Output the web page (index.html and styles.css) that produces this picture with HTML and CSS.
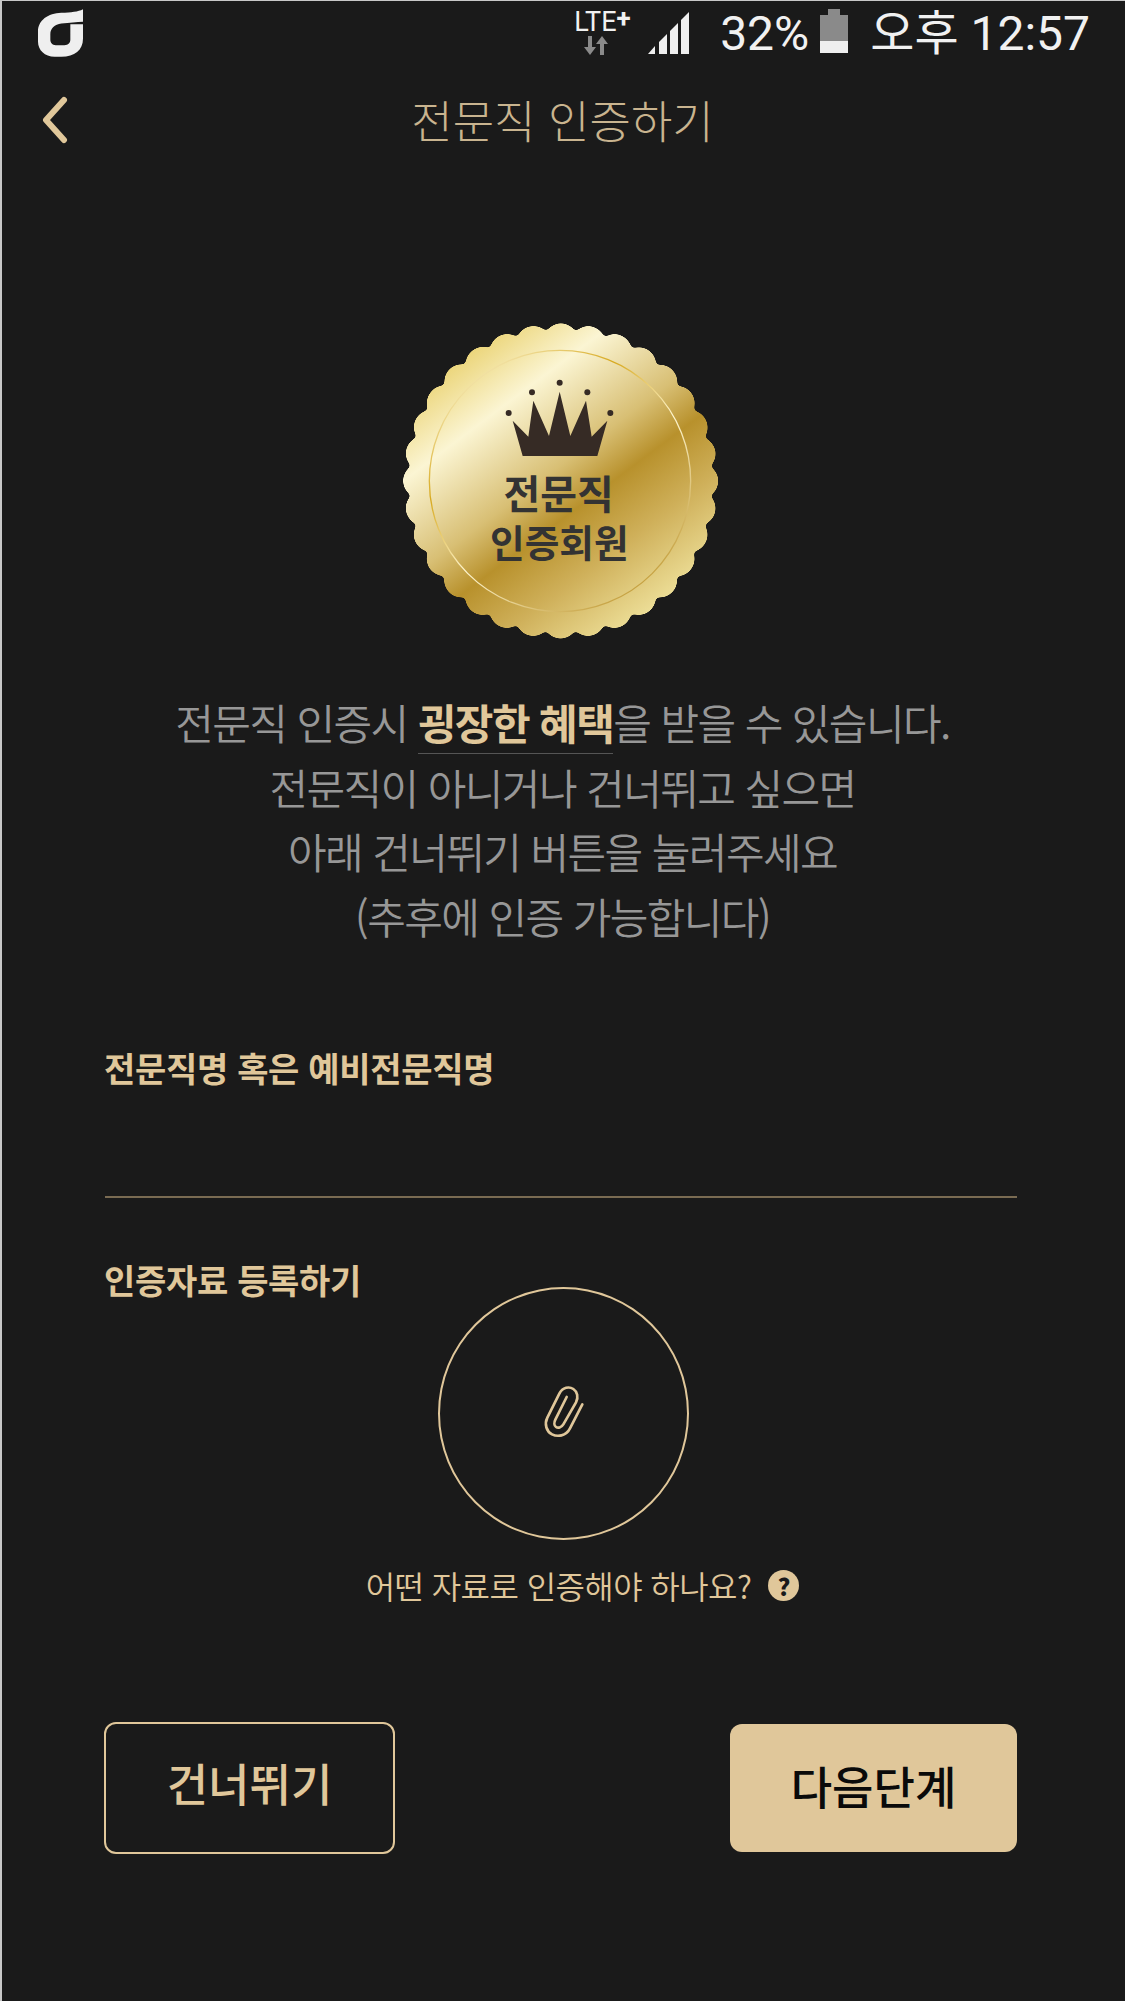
FILE: index.html
```html
<!DOCTYPE html>
<html lang="ko">
<head>
    <meta charset="UTF-8">
    <meta name="viewport" content="width=device-width, initial-scale=1.0">
    <title>전문직 인증하기</title>
    <link rel="stylesheet" href="styles.css">
</head>
<body>
    <div class="screen">
        <div class="status-bar">
            <svg class="app-logo" viewBox="55 27 135 143" width="45" height="48">
                <path fill="#efefef" d="M190 27V65C170 66 150 68 125 70C105 72 92 85 92 102V118C92 128 98 135 108 135H134C146 135 152 128 152 118V72H190V115C190 150 165 170 125 170H105C75 170 55 150 55 125V95C55 60 85 40 125 38C155 36 175 35 190 27Z"/>
            </svg>
            <div class="status-right">
                <div class="lte">
                    <span class="lte-text">LTE<span class="lte-plus">+</span></span>
                    <svg class="lte-arrows" viewBox="0 0 24 19" width="24" height="19">
                        <path fill="#8a8a8a" d="M4 0H8V11H12L6 19L0 11H4ZM18 0L24 8H20V19H16V8H12Z"/>
                    </svg>
                </div>
                <svg class="signal" viewBox="0 0 41 42" width="41" height="42">
                    <path fill="#efefef" d="M0 42L7 34V42ZM11 42V30L19 22V42ZM22 42V19L30 11V42ZM33 42V8L41 0V42Z"/>
                </svg>
                <span class="battery-text">32%</span>
                <div class="battery">
                    <div class="battery-cap"></div>
                    <div class="battery-empty"></div>
                    <div class="battery-fill"></div>
                </div>
                <span class="clock">오후 12:57</span>
            </div>
        </div>

        <div class="top-bar">
            <svg class="back-icon" viewBox="0 0 26 48" width="26" height="48">
                <path fill="none" stroke="#e0c79a" stroke-width="6" stroke-linecap="round" stroke-linejoin="round" d="M22 4L4 24L22 44"/>
            </svg>
            <h1 class="page-title">전문직 인증하기</h1>
        </div>

        <div class="badge-wrap">
            <svg class="badge" viewBox="0 0 1020 1020" width="340" height="340">
                <defs>
                    <linearGradient id="gold" gradientUnits="userSpaceOnUse" x1="230" y1="135" x2="795" y2="890">
                        <stop offset="0" stop-color="#ecd67c"/>
                        <stop offset="0.2" stop-color="#fbf5d3"/>
                        <stop offset="0.46" stop-color="#d8bf74"/>
                        <stop offset="0.6" stop-color="#b8912c"/>
                        <stop offset="0.78" stop-color="#cfb05a"/>
                        <stop offset="1" stop-color="#ecdd96"/>
                    </linearGradient>
                    <linearGradient id="ring" gradientUnits="userSpaceOnUse" x1="230" y1="135" x2="795" y2="890">
                        <stop offset="0" stop-color="#fbf5d3"/>
                        <stop offset="0.3" stop-color="#d7a91f"/>
                        <stop offset="0.55" stop-color="#fff6d0"/>
                        <stop offset="1" stop-color="#b98f22"/>
                    </linearGradient>
                    <filter id="soften" filterUnits="userSpaceOnUse" x="0" y="0" width="1020" height="1020">
                        <feGaussianBlur stdDeviation="7"/>
                        <feComponentTransfer>
                            <feFuncA type="linear" slope="10" intercept="-4.500"/>
                        </feComponentTransfer>
                    </filter>
                    <mask id="scallop" maskUnits="userSpaceOnUse" x="0" y="0" width="1020" height="1020">
                        <g filter="url(#soften)">
                            <circle cx="512" cy="513" r="440" fill="#fff"/>
                            <circle cx="512" cy="513" r="421" fill="none" stroke="#fff" stroke-width="104" stroke-linecap="round" stroke-dasharray="0 82.66"/>
                        </g>
                    </mask>
                </defs>
                <rect width="1020" height="1020" fill="url(#gold)" mask="url(#scallop)"/>
                <circle cx="510" cy="513" r="392" fill="none" stroke="url(#ring)" stroke-width="4"/>
                <path fill="#362b25" d="M368 332L415 380L430 272L477 378L509 245L541 378L588 272L605 380L652 332L622 438H398Z"/>
                <g fill="#362b25">
                    <circle cx="356" cy="309" r="9"/>
                    <circle cx="426" cy="247" r="9"/>
                    <circle cx="509" cy="218" r="9"/>
                    <circle cx="592" cy="247" r="9"/>
                    <circle cx="661" cy="309" r="9"/>
                </g>
                <text class="badge-text" x="506" y="597"><tspan class="badge-text-top">전문직</tspan></text>
                <text class="badge-text" x="508" y="741">인증회원</text>
            </svg>
        </div>

        <div class="intro">
            <p>전문직 인증시 <strong class="intro-mark">굉장한 혜택</strong>을 받을 수 있습니다.</p>
            <p>전문직이 아니거나 건너뛰고 싶으면</p>
            <p>아래 건너뛰기 버튼을 눌러주세요</p>
            <p>(추후에 인증 가능합니다)</p>
        </div>

        <div class="form">
            <div class="field-label">전문직명 혹은 예비전문직명</div>
            <div class="field-line"></div>
            <div class="field-label upload-label">인증자료 등록하기</div>
            <div class="upload">
                <div class="upload-circle">
                    <svg class="clip-icon" viewBox="0 0 210 210" width="70" height="70">
                        <path fill="none" stroke="#e0c79a" stroke-width="8" stroke-linecap="round" d="M157 100L120 172C108 196 82 198 66 190C50 182 42 160 52 140L88 68C98 48 118 46 130 54C142 62 146 78 138 94L100 160C94 170 84 172 78 168C72 164 72 154 76 146L110 78"/>
                    </svg>
                </div>
                <div class="upload-help">
                    <span>어떤 자료로 인증해야 하나요?</span>
                    <span class="help-icon">?</span>
                </div>
            </div>
        </div>

        <div class="actions">
            <button class="btn btn-skip">건너뛰기</button>
            <button class="btn btn-next">다음단계</button>
        </div>
    </div>
</body>
</html>
```

FILE: styles.css
```css
:root {
    --bg-color: #1a1a1a;
    --gold: #e0c79a;
    --title-color: #c9b48f;
    --muted: #979797;
}

* {
    box-sizing: border-box;
}

body {
    margin: 0;
    background-color: var(--bg-color);
    font-family: "Noto Sans CJK KR", "Noto Sans", sans-serif;
}

.screen {
    width: 1125px;
    height: 2001px;
    overflow: hidden;
    box-shadow: inset 2px 1px 0 #c8c8c8;
}

.status-bar {
    height: 64px;
    padding: 9px 35px 0 38px;
    display: flex;
    justify-content: space-between;
    align-items: flex-start;
}

.status-right {
    display: flex;
    align-items: flex-start;
    color: #f1f1f1;
}

.lte {
    width: 62px;
    display: flex;
    flex-direction: column;
    align-items: flex-start;
}

.lte-text {
    font-family: Roboto, sans-serif;
    font-size: 27px;
    line-height: 27px;
    white-space: nowrap;
}

.lte-plus {
    font-size: 26px;
    font-weight: 700;
    line-height: 0;
    vertical-align: 4px;
}

.lte-arrows {
    margin-left: 10px;
}

.signal {
    margin: 3px 0 0 12px;
}

.battery-text,
.clock {
    font-family: Roboto, "Noto Sans CJK KR", sans-serif;
    font-size: 48px;
    line-height: 50px;
    font-weight: 400;
}

.battery-text {
    margin-left: 31px;
}

.battery {
    width: 28px;
    height: 44px;
    margin: 0 22px 0 11px;
    display: flex;
    flex-direction: column;
    align-items: center;
}

.battery-cap {
    width: 12px;
    height: 6px;
    background: #8a8a8a;
}

.battery-empty {
    width: 100%;
    flex: 1;
    background: #8a8a8a;
}

.battery-fill {
    width: 100%;
    height: 12px;
    background: #efefef;
}

.top-bar {
    height: 68px;
    margin-top: 21px;
    display: flex;
    align-items: center;
    justify-content: center;
    position: relative;
}

.back-icon {
    position: absolute;
    left: 42px;
    top: 11px;
}

.page-title {
    margin: 0;
    font-size: 45px;
    font-weight: 300;
    color: var(--title-color);
}

.badge-wrap {
    margin-top: 157px;
    padding-left: 390px;
}

.badge {
    display: block;
}

.badge-text {
    font-size: 113px;
    font-weight: 700;
    fill: #333333;
    text-anchor: middle;
}

.badge-text-top {
    font-size: 120px;
}

.intro {
    margin-top: 40px;
    text-align: center;
    color: var(--muted);
    font-size: 42px;
    font-weight: 350;
    letter-spacing: -1.600px;
}

.intro p {
    margin: 0;
    height: 64.500px;
    line-height: 64.500px;
}

.intro-mark {
    color: var(--gold);
    font-weight: 700;
    border-bottom: 1px solid #555555;
    padding-bottom: 1px;
}

.form {
    margin-top: 98px;
    padding: 0 108px 0 104px;
}

.field-label {
    font-size: 34px;
    font-weight: 700;
    line-height: 44px;
    letter-spacing: -0.300px;
    color: var(--gold);
}

.field-line {
    height: 2px;
    margin: 106px 0 0 1px;
    background: #7a6b52;
}

.upload-label {
    margin-top: 60px;
}

.upload {
    margin-top: -15px;
    display: flex;
    flex-direction: column;
    align-items: center;
}

.upload-circle {
    width: 251px;
    height: 253px;
    margin-left: 5px;
    border: 2px solid var(--gold);
    border-radius: 50%;
    display: flex;
    align-items: center;
    justify-content: center;
}

.clip-icon {
    margin: 0 0 16px 3px;
}

.upload-help {
    margin: 22px 0 0 44px;
    display: flex;
    align-items: center;
    gap: 17px;
    color: var(--gold);
    font-size: 32px;
    font-weight: 350;
    letter-spacing: -0.600px;
}

.help-icon {
    width: 31px;
    height: 31px;
    border-radius: 50%;
    background: var(--gold);
    color: var(--bg-color);
    font-size: 24px;
    font-weight: 900;
    line-height: 31px;
    text-align: center;
}

.actions {
    margin-top: 114px;
    padding: 0 108px 0 104px;
    display: flex;
    justify-content: space-between;
    align-items: center;
}

.btn {
    font-family: inherit;
    font-size: 45px;
    font-weight: 500;
    border-radius: 12px;
}

.btn-skip {
    width: 291px;
    height: 132px;
    padding: 0 0 12px;
    background: transparent;
    border: 2px solid var(--gold);
    color: var(--gold);
}

.btn-next {
    width: 287px;
    height: 128px;
    padding: 0 0 5px;
    background: var(--gold);
    border: 0;
    color: #0a0a0a;
}
```
